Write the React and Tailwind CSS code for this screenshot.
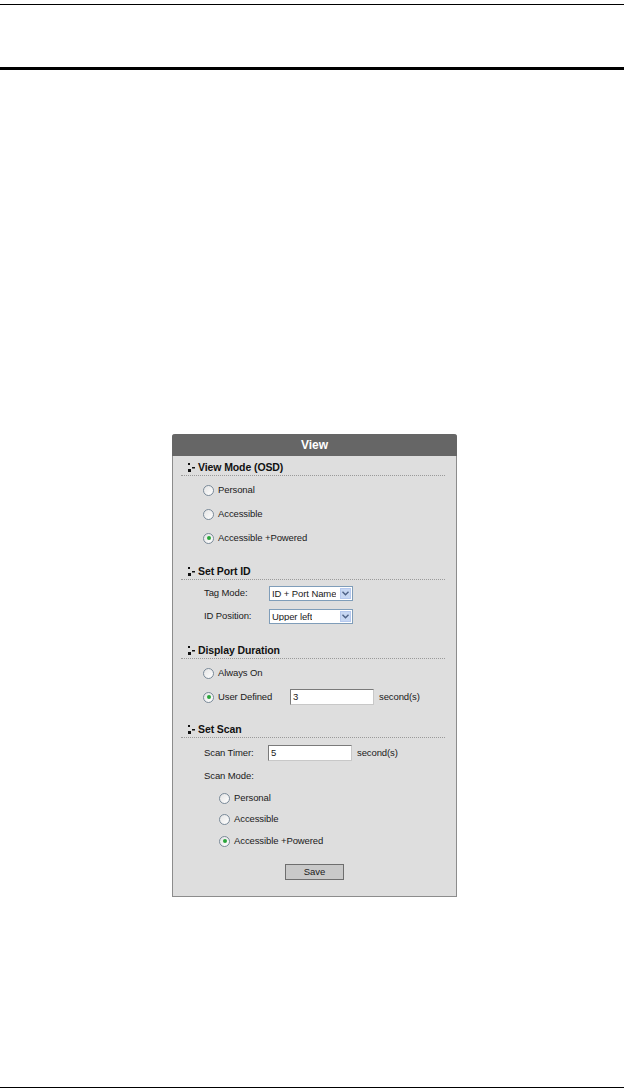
function Bullet() {
  return (
    <svg width="7" height="9" viewBox="0 0 7 9" className="shrink-0 mb-[2px]">
      <rect x="0" y="0" width="2" height="2" fill="#111" />
      <rect x="0" y="6" width="3" height="3" fill="#111" />
      <rect x="4" y="4" width="3" height="1.5" fill="#111" />
    </svg>
  )
}

function Heading({ title, className = "" }) {
  return (
    <div className={"ml-[8px] mr-[11px] h-[20px] flex items-end pb-[1px] gap-[3px] pl-[7px] border-b border-dotted border-[#9a9a9a] " + className}>
      <Bullet />
      <span className="font-bold text-[10.5px] leading-[13px] text-[#111]">{title}</span>
    </div>
  )
}

function RadioDot({ checked }) {
  return (
    <span className="shrink-0 w-[11px] h-[11px] rounded-full border border-[#7a8a99] bg-gradient-to-br from-[#e4e4e4] to-white flex items-center justify-center">
      {checked && <span className="w-[4px] h-[4px] rounded-full bg-[#2aa63a]" />}
    </span>
  )
}

function Radio({ label, checked, indent, h = "h-[24px]" }) {
  return (
    <div className={"flex items-center gap-[4px] " + h + " " + (indent ? "pl-[46px]" : "pl-[30px]")}>
      <RadioDot checked={checked} />
      <span>{label}</span>
    </div>
  )
}

function Select({ value }) {
  return (
    <div className="w-[84px] h-[15px] border border-[#7f9db9] bg-white flex items-center justify-between pl-[2px] pr-[1px]">
      <span className="leading-none whitespace-nowrap overflow-hidden">{value}</span>
      <span className="shrink-0 w-[11px] h-[11px] bg-[#c7d7f3] border border-[#b5c8ee] flex items-center justify-center">
        <svg width="7" height="5" viewBox="0 0 7 5">
          <path d="M0.5 0.8 L3.5 3.8 L6.5 0.8" fill="none" stroke="#4d6185" strokeWidth="1.4" />
        </svg>
      </span>
    </div>
  )
}

function TextBox({ value }) {
  return (
    <div className="w-[84px] h-[16px] border border-[#7a7a7a] border-r-[#c8c8c8] border-b-[#c8c8c8] bg-white flex items-center pl-[2px] leading-none">
      {value}
    </div>
  )
}

export default function App() {
  return (
    <div className="w-[624px] h-[1090px] bg-white" style={{ fontFamily: '"Liberation Sans", Arial, sans-serif' }}>
      <div className="pt-[4px]">
        <div className="h-px bg-black" />
      </div>
      <div className="mt-[62px] h-[3px] bg-black" />

      <div className="ml-[172px] mt-[364px] w-[285px] h-[463px] bg-[#dedede] border-x border-b border-[#8c8c8c] rounded-t-[3px] text-[9.5px] tracking-[-0.1px] text-[#1a1a1a]">
        <div className="h-[22px] -mx-px bg-[#666666] rounded-t-[3px] flex items-center justify-center text-white font-bold text-[12px] tracking-normal">
          View
        </div>

        <Heading title="View Mode (OSD)" />
        <div className="pt-[2px]">
          <Radio label="Personal" />
          <Radio label="Accessible" />
          <Radio label="Accessible +Powered" checked />
        </div>

        <Heading title="Set Port ID" className="mt-[10px]" />
        <div className="pt-[2px]">
          <div className="h-[23px] flex items-center pl-[31px]">
            <span className="w-[65px]">Tag Mode:</span>
            <Select value="ID + Port Name" />
          </div>
          <div className="h-[23px] flex items-center pl-[31px]">
            <span className="w-[65px]">ID Position:</span>
            <Select value="Upper left" />
          </div>
        </div>

        <Heading title="Display Duration" className="mt-[11px]" />
        <div className="pt-[2px]">
          <Radio label="Always On" />
          <div className="h-[24px] flex items-center pl-[30px] gap-[4px]">
            <RadioDot checked />
            <span className="w-[68px]">User Defined</span>
            <TextBox value="3" />
            <span className="ml-[1px]">second(s)</span>
          </div>
        </div>

        <Heading title="Set Scan" className="mt-[9px]" />
        <div className="pt-[3px]">
          <div className="h-[24px] flex items-center pl-[31px]">
            <span className="w-[64px]">Scan Timer:</span>
            <TextBox value="5" />
            <span className="ml-[5px]">second(s)</span>
          </div>
          <div className="h-[22px] flex items-center pl-[31px]">Scan Mode:</div>
          <Radio label="Personal" indent h="h-[22px]" />
          <Radio label="Accessible" indent h="h-[21px]" />
          <Radio label="Accessible +Powered" checked indent h="h-[22px]" />
        </div>

        <div className="mt-[12px] flex justify-center">
          <button className="w-[59px] h-[16px] bg-[#c9c9c9] border border-[#6e6e6e] text-[9.5px] leading-none text-[#1a1a1a]">
            Save
          </button>
        </div>
      </div>

      <div className="mt-[190px] h-px bg-black" />
    </div>
  )
}
